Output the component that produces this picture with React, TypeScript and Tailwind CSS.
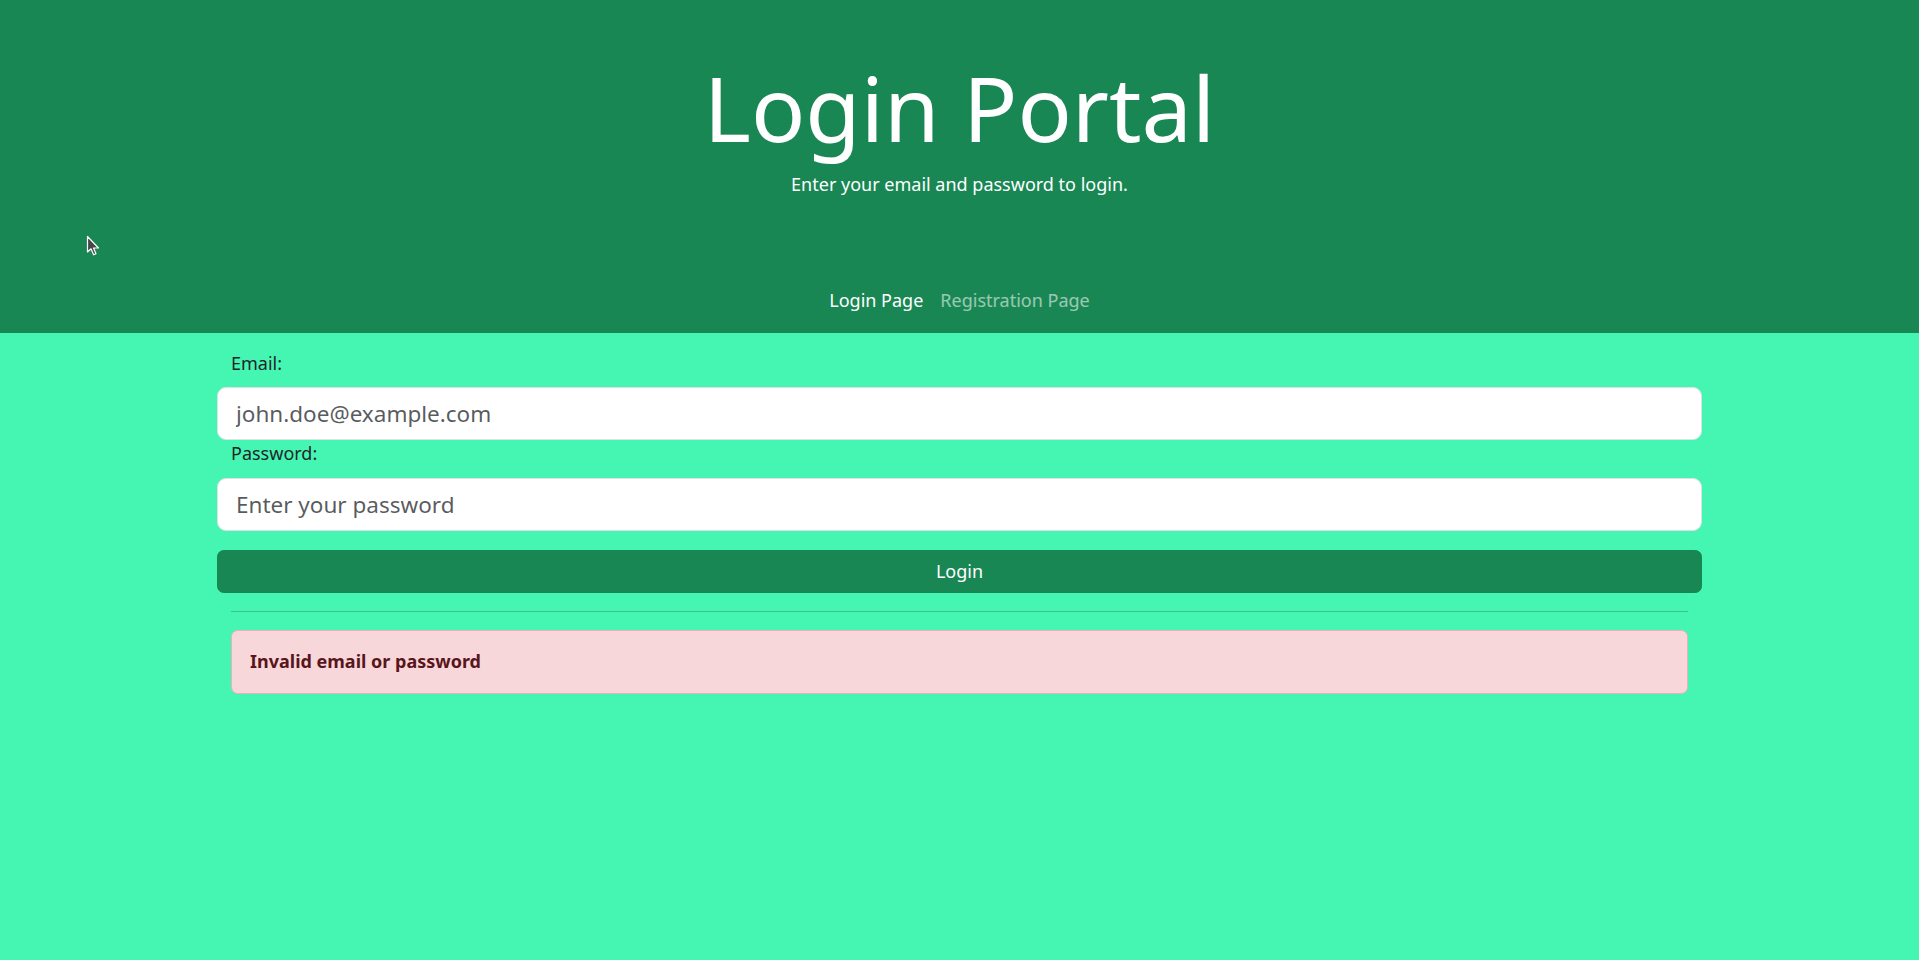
import React from 'react';

function Cursor() {
  return (
    <svg
      className="absolute left-[86px] top-[235px] pointer-events-none"
      width="16"
      height="24"
      viewBox="0 0 16 24"
    >
      <path d="M1.5 1.5 L1.5 17 L5 13.8 L7.6 19.8 L10 18.8 L7.5 13 L12.5 13 Z" fill="#47474a" stroke="#ffffff" strokeWidth="1.2" strokeLinejoin="round" />
    </svg>
  );
}

export default function App() {
  return (
    <div className="relative min-h-[960px] bg-[#45f6b2] font-['Noto_Sans',sans-serif] text-[#212529]">
      <Cursor />
      <header className="bg-[#198754] h-[333px] flex flex-col items-center text-white">
        <h1 className="pt-[53px] text-[90px] leading-[108px] font-normal">Login Portal</h1>
        <p className="mt-[10px] text-[18px] leading-[27px]">Enter your email and password to login.</p>
        <nav className="mt-[89px] flex gap-[17px] text-[18px] leading-[27px]">
          <a className="text-white">Login Page</a>
          <a className="text-white/55">Registration Page</a>
        </nav>
      </header>

      <main className="w-[1485px] mx-auto pt-[16.5px] text-[18px] leading-[27px]">
        <form className="flex flex-col" onSubmit={(e) => e.preventDefault()}>
          <label className="px-[14px]">Email:</label>
          <input
            type="email"
            placeholder="john.doe@example.com"
            className="mt-[10.5px] h-[53px] w-full bg-white border border-[#dee2e6] rounded-[9px] px-[18px] text-[22.5px] outline-none placeholder:text-[#212529]/75"
          />
          <label className="px-[14px]">Password:</label>
          <input
            type="password"
            placeholder="Enter your password"
            className="mt-[10.5px] h-[53px] w-full bg-white border border-[#dee2e6] rounded-[9px] px-[18px] text-[22.5px] outline-none placeholder:text-[#212529]/75"
          />
          <button
            type="submit"
            className="mt-[19px] h-[43px] w-full bg-[#198754] border border-[#198754] rounded-[6.75px] text-white"
          >
            Login
          </button>
        </form>

        <hr className="mx-[14px] mt-[18px] border-0 border-t border-[#3cc290]" />

        <div className="mx-[14px] mt-[18px] bg-[#f8d7da] border border-[#f1aeb5] rounded-[6.75px] px-[18px] py-[17.5px] text-[#58151c] font-bold">
          Invalid email or password
        </div>
      </main>
    </div>
  );
}
